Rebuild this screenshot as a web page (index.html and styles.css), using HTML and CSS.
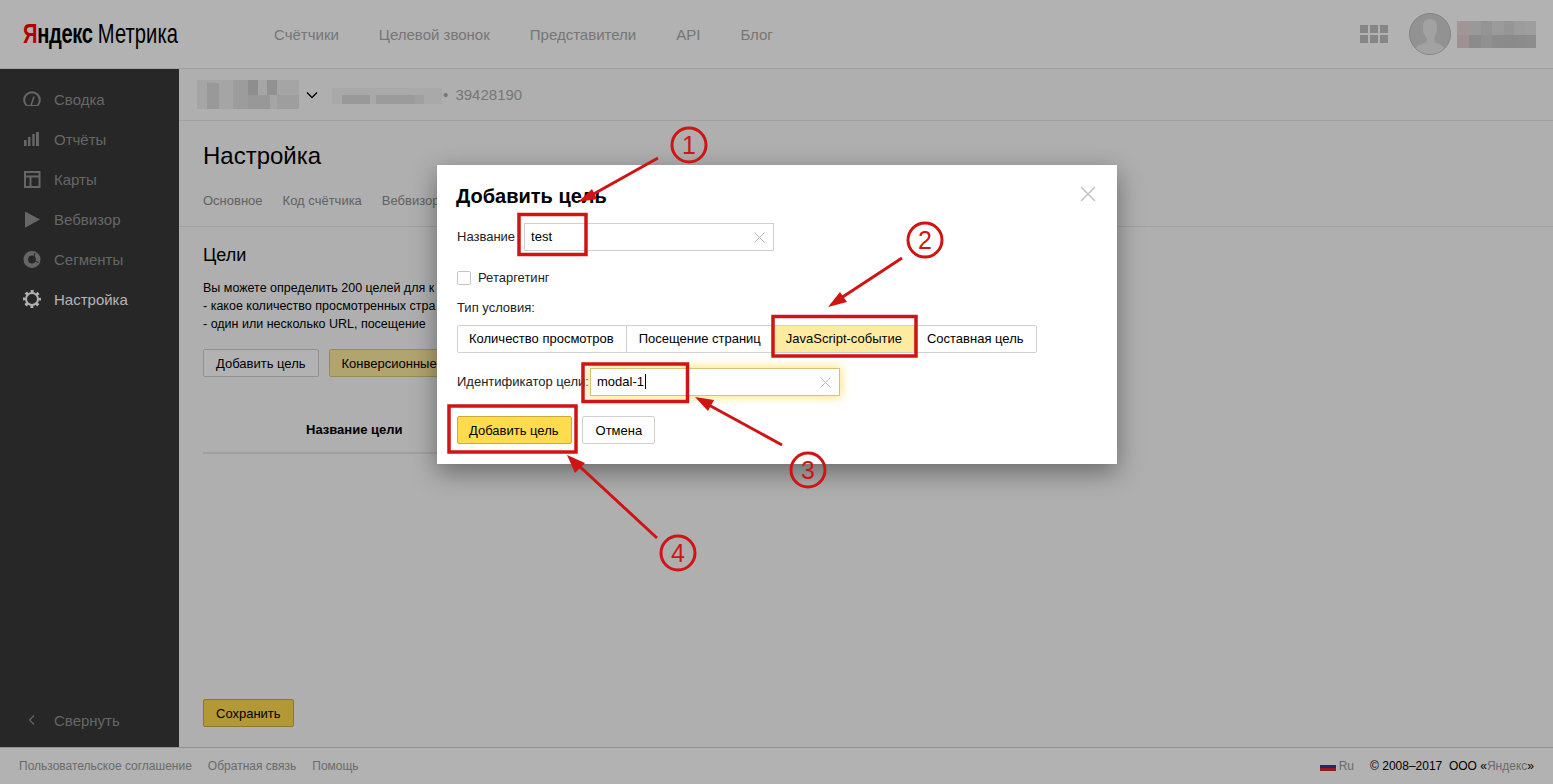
FILE: index.html
```html
<!DOCTYPE html>
<html>
<head>
    <title>Яндекс Метрика</title>
    <link rel="stylesheet" href="styles.css">
</head>
<body>
    <div class="page">
        <header class="top">
            <div class="logo"><span class="logo-inner"><b><i>Я</i>ндекс</b> <span class="logo-name">Метрика</span></span></div>
            <nav class="top-nav">
                <a>Счётчики</a>
                <a>Целевой звонок</a>
                <a>Представители</a>
                <a>API</a>
                <a>Блог</a>
            </nav>
            <div class="top-right">
                <div class="apps">
                    <span></span><span></span><span></span><span></span><span></span><span></span>
                </div>
                <svg class="avatar" width="44" height="44" viewBox="0 0 44 44">
                    <circle cx="22" cy="22" r="20.5" fill="#d2d2d2" stroke="#bdbdbd" stroke-width="1"/>
                    <path d="M15 14c0-5 3-7 7-7s7 2 7 7c0 3 0 6-1 8-1 2-2 4-2 6 0 2 2 3 5 4 3 1 5 3 5 4-3 4-8 6-14 6s-11-2-14-6c1-2 3-3 6-4 3-1 5-2 5-4 0-2-2-4-3-6-1-2-1-5-1-8z" fill="#e8e8e8"/>
                </svg>
                <svg class="blur-name" width="79" height="27" viewBox="0 0 79 27">
                    <rect width="12" height="14" fill="#e8d6d6"/><rect x="12" width="12" height="14" fill="#dcdcdc"/><rect x="24" width="11" height="14" fill="#d4d4d4"/><rect x="35" width="12" height="14" fill="#dedede"/><rect x="47" width="10" height="14" fill="#d6d6d6"/><rect x="57" width="11" height="14" fill="#e0e0e0"/><rect x="68" width="11" height="14" fill="#e2e2e2"/>
                    <rect y="14" width="12" height="13" fill="#e4d0d0"/><rect x="12" y="14" width="12" height="13" fill="#c8c8c8"/><rect x="24" y="14" width="11" height="13" fill="#cecece"/><rect x="35" y="14" width="12" height="13" fill="#c8c8c8"/><rect x="47" y="14" width="10" height="13" fill="#c6c6c6"/><rect x="57" y="14" width="11" height="13" fill="#c8c8c8"/><rect x="68" y="14" width="11" height="13" fill="#cacaca"/>
                </svg>
            </div>
        </header>

        <div class="middle">
            <aside class="side">
                <a class="side-item">
                    <svg width="18" height="18" viewBox="0 0 18 18"><path d="M3.500 15.500A7.800 7.800 0 1 1 14.500 15.500" fill="none" stroke="currentColor" stroke-width="2"/><path d="M3.500 15.500h11" stroke="currentColor" stroke-width="1"/><path d="M8 15.500L11 6.500" stroke="currentColor" stroke-width="1.500"/></svg>
                    Сводка
                </a>
                <a class="side-item">
                    <svg width="18" height="18" viewBox="0 0 18 18"><path d="M1 10h2.700v6H1zM5 7h2.500v9H5zM9.300 4h2.400v12H9.300zM13 2h3v14h-3z" fill="currentColor"/></svg>
                    Отчёты
                </a>
                <a class="side-item">
                    <svg width="18" height="18" viewBox="0 0 18 18"><path d="M2 2h14.500v15H2zM2 6.500h14.500M7.500 6.500V17" fill="none" stroke="currentColor" stroke-width="2"/></svg>
                    Карты
                </a>
                <a class="side-item">
                    <svg width="18" height="18" viewBox="0 0 18 18"><path d="M2 1.500L17 9.500 2 17.700z" fill="currentColor"/></svg>
                    Вебвизор
                </a>
                <a class="side-item">
                    <svg width="18" height="18" viewBox="0 0 18 18"><circle cx="9" cy="9.500" r="6.200" fill="none" stroke="currentColor" stroke-width="4.600"/><path d="M12 3L10.700 7M15.500 12.500L11.500 11" stroke="#383838" stroke-width="1"/></svg>
                    Сегменты
                </a>
                <a class="side-item active">
                    <svg width="18" height="18" viewBox="0 0 18 18"><circle cx="9" cy="9" r="6" fill="none" stroke="currentColor" stroke-width="2"/><circle cx="9" cy="9" r="7.800" fill="none" stroke="currentColor" stroke-width="2.400" stroke-dasharray="3 3.125" stroke-dashoffset="1.500"/></svg>
                    Настройка
                </a>
                <a class="side-item collapse">
                    <svg width="18" height="18" viewBox="0 0 18 18"><path d="M11 4.500L6.500 9l4.500 4.500" fill="none" stroke="currentColor" stroke-width="1.200"/></svg>
                    Свернуть
                </a>
            </aside>

            <main class="content">
                <div class="subbar">
                    <svg class="blur-a" width="102" height="29" viewBox="0 0 102 29">
                        <rect width="102" height="29" fill="#ececec"/><rect x="10" y="3" width="12" height="26" fill="#dcdcdc"/><rect x="36" width="15" height="29" fill="#e0e0e0"/><rect x="51" width="10" height="15" fill="#cccccc"/><rect x="51" y="15" width="22" height="14" fill="#dadada"/><rect x="70" width="10" height="15" fill="#d0d0d0"/><rect x="80" y="15" width="22" height="14" fill="#e2e2e2"/>
                    </svg>
                    <svg class="chev" width="12" height="8" viewBox="0 0 12 8"><path d="M1 1.500l5 5 5-5" fill="none" stroke="#000" stroke-width="1.300"/></svg>
                    <svg class="blur-b" width="110" height="16" viewBox="0 0 110 16">
                        <rect width="110" height="16" fill="#f3f3f3"/><rect x="10" y="7" width="28" height="9" fill="#dcdcdc"/><rect x="44" y="7" width="38" height="9" fill="#dedede"/><rect x="82" y="7" width="10" height="9" fill="#e6e6e6"/>
                    </svg>
                    <span class="counter">• 39428190</span>
                </div>

                <div class="head">
                    <h1>Настройка</h1>
                    <div class="tabs">
                        <a>Основное</a><a>Код счётчика</a><a>Вебвизор</a>
                    </div>
                </div>

                <section class="goals">
                    <h2>Цели</h2>
                    <p>Вы можете определить 200 целей для к<br>
                    - какое количество просмотренных стра<br>
                    - один или несколько URL, посещение</p>
                    <div class="goal-actions">
                        <button class="btn">Добавить цель</button>
                        <button class="btn btn-pale">Конверсионные</button>
                    </div>
                    <div class="goal-table">Название цели</div>
                    <button class="btn btn-yellow save">Сохранить</button>
                </section>
            </main>
        </div>

        <footer class="foot">
            <a>Пользовательское соглашение</a>
            <a>Обратная связь</a>
            <a>Помощь</a>
            <div class="foot-right">
                <span class="flag"></span><a class="lang">Ru</a>
                <span class="copy">© 2008–2017 &nbsp;ООО «<a>Яндекс</a>»</span>
            </div>
        </footer>
    </div>

    <div class="dim"></div>

    <div class="modal">
        <svg class="modal-close" width="16" height="16" viewBox="0 0 16 16"><path d="M1 1l14 14M15 1L1 15" stroke="#c4c4c4" stroke-width="1.600"/></svg>
        <h3>Добавить цель</h3>
        <div class="row row-name">
            <label>Название</label>
            <div class="field">test<svg class="clear" width="11" height="11" viewBox="0 0 11 11"><path d="M.5.5l10 10M10.500.5l-10 10" stroke="#bbb"/></svg></div>
        </div>
        <div class="row row-check"><span class="check"></span>Ретаргетинг</div>
        <div class="type-label">Тип условия:</div>
        <div class="group">
            <a>Количество просмотров</a>
            <a>Посещение страниц</a>
            <a class="on">JavaScript-событие</a>
            <a>Составная цель</a>
        </div>
        <div class="row row-id">
            <label>Идентификатор цели:</label>
            <div class="field focus">modal-1<span class="caret"></span><svg class="clear" width="11" height="11" viewBox="0 0 11 11"><path d="M.5.5l10 10M10.500.5l-10 10" stroke="#bbb"/></svg></div>
        </div>
        <div class="row row-btns">
            <button class="btn btn-yellow">Добавить цель</button>
            <button class="btn btn-cancel">Отмена</button>
        </div>
    </div>

    <svg class="marks" width="1553" height="784" viewBox="0 0 1553 784">
        <g fill="none" stroke="#d01414" stroke-width="3.500">
            <rect x="519" y="214.500" width="67" height="40"/>
            <rect x="773" y="316.500" width="143" height="39.500"/>
            <rect x="583" y="364" width="104.500" height="37.500"/>
            <rect x="449" y="406" width="127" height="46"/>
        </g>
        <g fill="none" stroke="#d01414" stroke-width="3">
            <circle cx="689" cy="145" r="17"/>
            <circle cx="925" cy="240" r="17"/>
            <circle cx="808" cy="470" r="17"/>
            <circle cx="678" cy="553" r="17"/>
        </g>
        <g stroke="#d01414" stroke-width="3">
            <path d="M658 158L590 196"/>
            <path d="M902 258L838 300"/>
            <path d="M782 445L707 404"/>
            <path d="M657 538L576 463"/>
        </g>
        <g fill="#d01414">
            <path d="M578 202L592 189 597 199z"/>
            <path d="M828 307L840 292 847 302z"/>
            <path d="M695 397L714 400 708 411z"/>
            <path d="M567 455L585 463 575 473z"/>
        </g>
        <g class="mark-num">
            <text x="689" y="154">1</text>
            <text x="925" y="249">2</text>
            <text x="808" y="479">3</text>
            <text x="678" y="562">4</text>
        </g>
    </svg>
</body>
</html>
```

FILE: styles.css
```css
html, body {
    height: 100%;
}
body {
    margin: 0;
    font-family: "Liberation Sans", Arial, sans-serif;
    font-size: 13px;
    color: #000;
    background: #fff;
    overflow: hidden;
}
.page {
    display: flex;
    flex-direction: column;
    height: 100vh;
}

/* header */
.top {
    display: flex;
    align-items: center;
    height: 68px;
    border-bottom: 1px solid #e6e6e6;
    flex: none;
}
.logo {
    width: 274px;
    padding-left: 23px;
    box-sizing: border-box;
    flex: none;
}
.logo-inner {
    display: inline-block;
    font-size: 28px;
    letter-spacing: -0.5px;
    white-space: nowrap;
    transform: scaleX(0.72);
    transform-origin: left center;
}
.logo-inner i {
    font-style: normal;
    color: #f00;
}
.logo-name {
    letter-spacing: 0.1px;
}
.top-nav {
    display: flex;
    gap: 40px;
    font-size: 15px;
    color: #aaa;
}
.top-right {
    display: flex;
    align-items: center;
    margin-left: auto;
    padding-right: 17px;
}
.apps {
    display: grid;
    grid-template-columns: repeat(3, 8px);
    grid-auto-rows: 8px;
    gap: 2px;
    margin-right: 20px;
}
.apps span {
    background: #c0c0c0;
}
.avatar {
    margin-right: 5px;
}

/* sidebar */
.middle {
    display: flex;
    flex: 1;
    min-height: 0;
}
.side {
    display: flex;
    flex-direction: column;
    width: 179px;
    flex: none;
    padding: 10px 0 7px;
    box-sizing: border-box;
    background: #383838;
}
.side-item {
    display: flex;
    align-items: center;
    gap: 13px;
    height: 40px;
    padding-left: 23px;
    font-size: 15px;
    color: #939393;
}
.side-item.active {
    color: #fff;
}
.side-item.collapse {
    margin-top: auto;
}

/* content */
.content {
    display: flex;
    flex-direction: column;
    flex: 1;
    min-width: 0;
    background: #fbfbfb;
}
.subbar {
    display: flex;
    align-items: center;
    height: 51px;
    padding-left: 18px;
    border-bottom: 1px solid #e6e6e6;
    flex: none;
}
.chev {
    margin: 0 14px 0 7px;
}
.blur-b {
    margin-top: 2px;
}
.counter {
    margin-left: 1px;
    font-size: 15px;
    word-spacing: 3px;
    color: #aaa;
}
.head {
    padding: 21px 24px 0;
    height: 84px;
    border-bottom: 1px solid #e6e6e6;
    flex: none;
}
.head h1 {
    margin: 0;
    font-size: 24px;
    font-weight: normal;
    line-height: 28px;
}
.tabs {
    display: flex;
    gap: 20px;
    margin-top: 23px;
    color: #8c8c8c;
}
.goals {
    display: flex;
    flex-direction: column;
    align-items: flex-start;
    flex: 1;
    padding: 17px 24px 20px;
}
.goals h2 {
    margin: 0;
    font-size: 18px;
    font-weight: normal;
    line-height: 22px;
}
.goals p {
    margin: 13px 0 0;
    line-height: 18px;
    font-size: 12.5px;
    white-space: nowrap;
}
.goal-actions {
    display: flex;
    gap: 10px;
    margin-top: 16px;
}
.goal-table {
    width: 640px;
    box-sizing: border-box;
    margin-top: 44px;
    padding: 0 0 13px 103px;
    border-bottom: 2px solid #e6e6e6;
    font-weight: bold;
    line-height: 18px;
}
.save {
    margin-top: auto;
}
.btn {
    height: 28px;
    padding: 0 12px;
    border: 1px solid #d0d0d0;
    border-radius: 2px;
    background: #fff;
    color: #000;
    font: 13px "Liberation Sans", Arial, sans-serif;
}
.btn-yellow {
    background: #ffdb4d;
    border-color: #c9ad3a;
}
.btn-pale {
    background: #ffeba0;
    border-color: #d8c77f;
}

/* footer */
.foot {
    display: flex;
    align-items: center;
    gap: 16px;
    height: 36px;
    padding: 0 19px;
    border-top: 1px solid #d2d2d2;
    flex: none;
    font-size: 12px;
    color: #999;
}
.foot-right {
    display: flex;
    align-items: center;
    margin-left: auto;
}
.flag {
    width: 16px;
    height: 9px;
    margin-right: 3px;
    background: linear-gradient(#fff 33%, #2a3f9d 33%, #2a3f9d 66%, #d8232a 66%);
}
.copy {
    margin-left: 16px;
    color: #000;
}
.copy a {
    color: #999;
}

/* dimmed layer and dialog */
.dim {
    position: absolute;
    inset: 0;
    background: rgba(0, 0, 0, 0.3);
}
.modal {
    position: absolute;
    left: 437px;
    top: 165px;
    width: 680px;
    height: 299px;
    box-sizing: border-box;
    padding: 19px 20px 0;
    background: #fff;
    box-shadow: 0 8px 24px rgba(0, 0, 0, 0.4);
    color: #222;
}
.modal h3 {
    margin: 0 0 0 -1px;
    font-size: 20px;
    line-height: 24px;
    color: #000;
}
.modal-close {
    position: absolute;
    right: 21px;
    top: 21px;
}
.row {
    display: flex;
    align-items: center;
}
.row label {
    margin-bottom: 2px;
}
.row-name {
    margin-top: 15px;
}
.row-name label {
    margin-right: 9px;
}
.field {
    display: flex;
    align-items: center;
    width: 250px;
    height: 28px;
    box-sizing: border-box;
    padding: 0 6px 2px;
    border: 1px solid #d0d0d0;
    color: #000;
}
.field .clear {
    margin: 2px 2px 0 auto;
}
.field.focus {
    border-color: #d5c27a;
    box-shadow: 0 0 9px 1px rgba(255, 219, 77, 0.8);
}
.caret {
    width: 1px;
    height: 15px;
    margin-left: 1px;
    background: #000;
}
.row-check {
    gap: 7px;
    margin-top: 19px;
}
.check {
    width: 12px;
    height: 12px;
    border: 1px solid #c4c4c4;
    border-radius: 2px;
}
.type-label {
    margin-top: 15px;
    line-height: 15px;
}
.group {
    display: flex;
    width: 580px;
    height: 28px;
    box-sizing: border-box;
    margin-top: 10px;
    border: 1px solid #d0d0d0;
    border-radius: 2px;
    color: #000;
}
.group a {
    display: flex;
    align-items: center;
    padding: 0 12px 2px;
    border-right: 1px solid #d0d0d0;
    white-space: nowrap;
}
.group a:first-child {
    padding-left: 11px;
}
.group a:last-child {
    border-right: none;
}
.group a.on {
    background: #ffeba0;
    border-right-color: #d5c27a;
}
.row-id {
    margin-top: 15px;
}
.row-id label {
    width: 133px;
    flex: none;
    white-space: nowrap;
}
.row-btns {
    gap: 10px;
    margin-top: 20px;
}
.row-btns .btn-yellow {
    padding-left: 11px;
}
.row-btns .btn-cancel {
    padding-left: 13px;
}

/* numbered marks drawn on top of the shot */
.marks {
    position: absolute;
    left: 0;
    top: 0;
}
.mark-num text {
    font: 25px "Liberation Sans", Arial, sans-serif;
    fill: #d01414;
    text-anchor: middle;
}
```
